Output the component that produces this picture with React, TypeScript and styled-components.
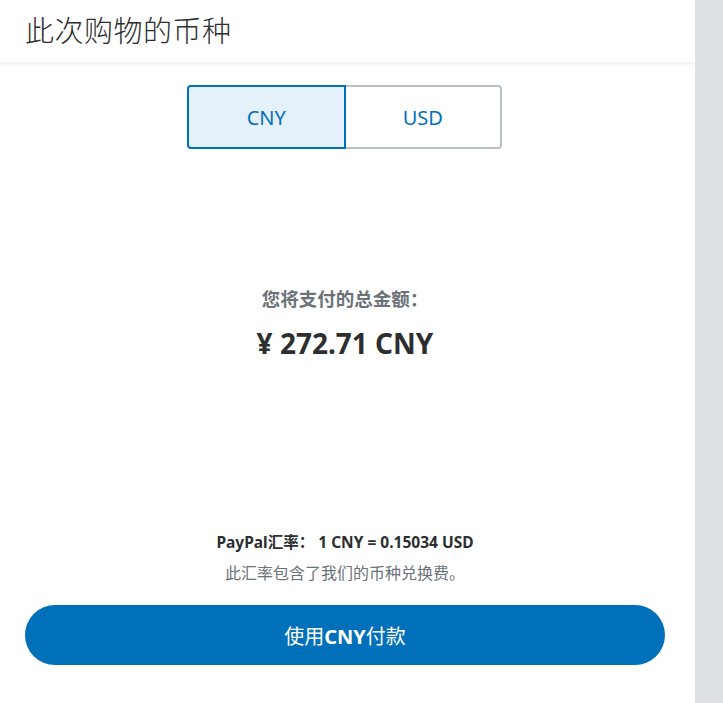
import { useState } from "react";
import styled, { createGlobalStyle } from "styled-components";

const GlobalStyle = createGlobalStyle`
  html, body {
    margin: 0;
    padding: 0;
    background: #dbe0e3;
  }
  body {
    font-family: "Noto Sans", "Noto Sans CJK SC", sans-serif;
    color: #2c2e2f;
  }
`;

const currencies = ["CNY", "USD"];

const App = () => {
  const [selected, setSelected] = useState("CNY");

  return (
    <>
      <GlobalStyle />
      <Page>
        <Panel>
          <Header>
            <Title>此次购物的币种</Title>
          </Header>
          <Body>
            <Toggle>
              {currencies.map((c) => (
                <ToggleButton
                  key={c}
                  $active={c === selected}
                  onClick={() => setSelected(c)}
                >
                  {c}
                </ToggleButton>
              ))}
            </Toggle>
            <Total>
              <TotalLabel>您将支付的总金额：</TotalLabel>
              <TotalAmount>¥ 272.71 CNY</TotalAmount>
            </Total>
            <Rate>
              <RateLine>PayPal汇率： 1 CNY = 0.15034 USD</RateLine>
              <RateNote>此汇率包含了我们的币种兑换费。</RateNote>
            </Rate>
            <PayButton>
              使用<strong>CNY</strong>付款
            </PayButton>
          </Body>
        </Panel>
        <Side />
      </Page>
    </>
  );
};

const Page = styled.div`
  display: grid;
  grid-template-columns: 695px 1fr;
  min-height: 703px;
`;

const Panel = styled.main`
  background: #fff;
  display: flex;
  flex-direction: column;
`;

const Side = styled.aside`
  background: #dbe0e3;
`;

const Header = styled.header`
  height: 62px;
  box-sizing: border-box;
  display: flex;
  align-items: center;
  padding: 0 25px 5px;
  box-shadow: 0 2px 4px rgba(0, 0, 0, 0.07);
`;

const Title = styled.h1`
  margin: 0;
  font-size: 29px;
  font-weight: 300;
  color: #2c2e2f;
  letter-spacing: 0.5px;
`;

const Body = styled.div`
  display: flex;
  flex-direction: column;
  align-items: center;
  padding: 23px 30px 0 25px;
`;

const Toggle = styled.div`
  display: flex;
  width: 315px;
  height: 64px;
  margin-left: -1px;
`;

const ToggleButton = styled.button<{ $active: boolean }>`
  flex: 1;
  font-family: inherit;
  font-size: 20px;
  color: #0070ba;
  cursor: pointer;
  background: ${(p) => (p.$active ? "#e4f0fa" : "#fff")};
  border: ${(p) => (p.$active ? "2px solid #0070ba" : "2px solid #b9c0c4")};
  z-index: ${(p) => (p.$active ? 1 : 0)};

  &:first-child {
    border-radius: 4px 0 0 4px;
  }
  &:last-child {
    border-radius: 0 4px 4px 0;
    margin-left: -2px;
  }
`;

const Total = styled.section`
  margin-top: 138px;
  display: flex;
  flex-direction: column;
  align-items: center;
`;

const TotalLabel = styled.div`
  font-size: 18.5px;
  font-weight: 700;
  color: #6c7378;
  line-height: 24px;
`;

const TotalAmount = styled.div`
  margin-top: 14px;
  font-size: 28px;
  font-weight: 700;
  color: #2c2e2f;
  line-height: 36px;
`;

const Rate = styled.section`
  margin-top: 170px;
  display: flex;
  flex-direction: column;
  align-items: center;
`;

const RateLine = styled.div`
  font-size: 15.5px;
  font-weight: 700;
  color: #2c2e2f;
  line-height: 22px;
`;

const RateNote = styled.div`
  margin-top: 9px;
  font-size: 16px;
  color: #6c7378;
  line-height: 22px;
`;

const PayButton = styled.button`
  margin-top: 21px;
  align-self: stretch;
  height: 60px;
  border: none;
  border-radius: 30px;
  background: #0070ba;
  color: #fff;
  font-family: inherit;
  font-size: 20px;
  cursor: pointer;

  strong {
    font-weight: 700;
  }
`;

export default App;
